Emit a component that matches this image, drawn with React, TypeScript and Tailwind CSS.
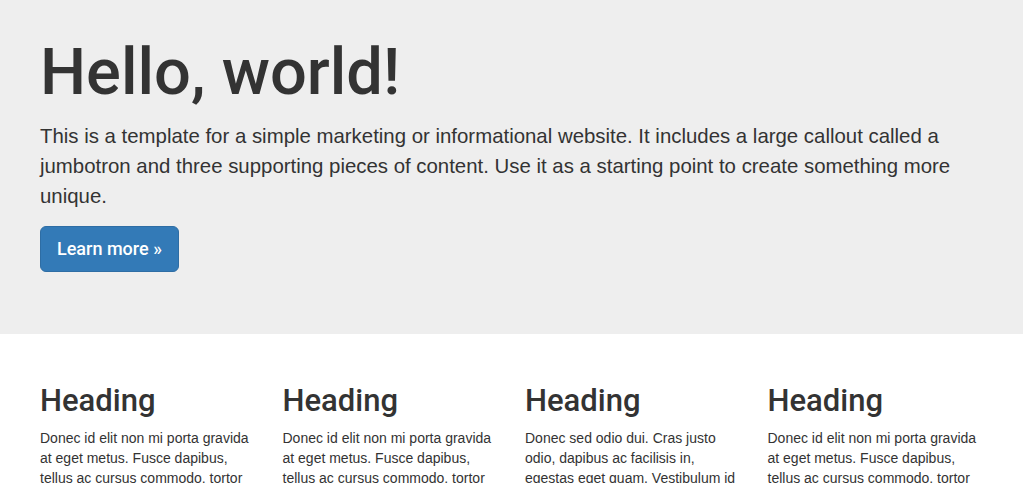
import React from "react";

const columns = [
  "Donec id elit non mi porta gravida at eget metus. Fusce dapibus, tellus ac cursus commodo, tortor mauris condimentum nibh, ut fermentum massa justo sit amet risus.",
  "Donec id elit non mi porta gravida at eget metus. Fusce dapibus, tellus ac cursus commodo, tortor mauris condimentum nibh, ut fermentum massa justo sit amet risus.",
  "Donec sed odio dui. Cras justo odio, dapibus ac facilisis in, egestas eget quam. Vestibulum id ligula porta felis euismod semper.",
  "Donec id elit non mi porta gravida at eget metus. Fusce dapibus, tellus ac cursus commodo, tortor mauris condimentum nibh, ut fermentum massa justo sit amet risus.",
];

const App = () => {
  return (
    <div className="min-h-screen bg-white text-[#333] font-['Liberation_Sans',Arial,sans-serif]">
      {/* Jumbotron */}
      <div className="bg-[#eee] pt-[37px] pb-[62px]">
        <div className="w-[940px] ml-[40px]">
          <h1 className="font-['Roboto',sans-serif] text-[65px] leading-[1.1] font-medium mb-[12px]">Hello, world!</h1>
          <p className="text-[20.4px] leading-[30px] mb-[15px]">
            This is a template for a simple marketing or informational website. It includes a large callout called a
            jumbotron and three supporting pieces of content. Use it as a starting point to create something more
            unique.
          </p>
          <button className="h-[46px] px-[16px] bg-[#337ab7] border border-[#2e6da4] rounded-[6px] text-white text-[18px] leading-[1.33] font-['Roboto',sans-serif] font-medium">
            Learn more &raquo;
          </button>
        </div>
      </div>

      {/* Columns */}
      <div className="pt-[50px] ml-[40px] w-[940px] grid grid-cols-4 gap-x-[30px]">
        {columns.map((text, index) => (
          <div key={index}>
            <h2 className="font-['Roboto',sans-serif] text-[31px] leading-[1.1] font-medium mb-[10px]">Heading</h2>
            <p className="text-[14px] leading-[20px]">{text}</p>
          </div>
        ))}
      </div>
    </div>
  );
};

export default App;
